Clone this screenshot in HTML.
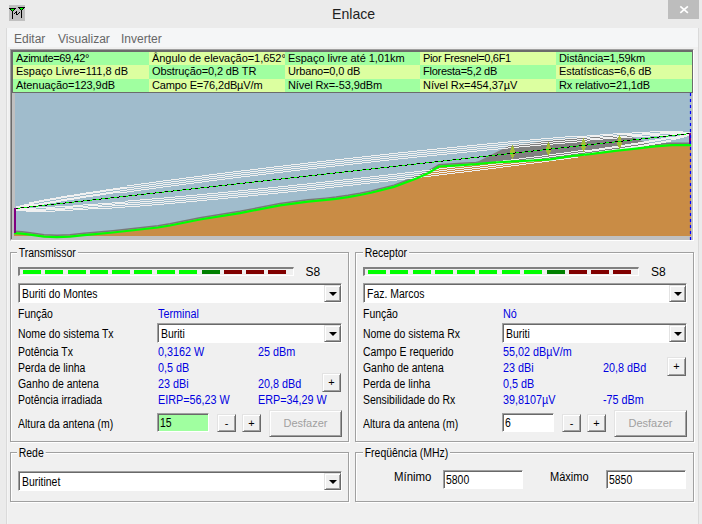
<!DOCTYPE html>
<html><head><meta charset="utf-8">
<style>
*{margin:0;padding:0;box-sizing:border-box}
html,body{width:702px;height:524px;overflow:hidden;background:#ebebeb;font-family:"Liberation Sans",sans-serif;font-size:11px;color:#000}
.a{position:absolute;white-space:nowrap;line-height:13px}
#client{position:absolute;left:7px;top:47px;width:691px;height:477px;background:#f0f0f0}
#menu{position:absolute;left:7px;top:28px;width:691px;height:19px;background:#f5f6f7}
.mi{position:absolute;top:32px;font-size:12px;color:#666;line-height:14px}
#title{position:absolute;left:331.5px;top:5px;font-size:15px;color:#1e1e1e;line-height:18px;transform:scaleX(0.94);transform-origin:0 0}
#close{position:absolute;left:668px;top:0;width:31px;height:19px;background:#bdbdbd}
#frame{position:absolute;left:10px;top:49px;width:684px;height:192px;border-top:1px solid #a0a0a0;border-left:1px solid #a0a0a0;border-right:1px solid #fff;border-bottom:1px solid #fff;background:#c0c0c0}
#frame2{position:absolute;left:11px;top:50px;width:682px;height:189px;border-top:1px solid #6b6b6b;border-left:1px solid #6b6b6b}
.cell{position:absolute;height:13px;font-size:11px;line-height:13px;padding-left:3px;white-space:nowrap;overflow:hidden}
.g{background:#a0ffa0}.y{background:#dcffa0}
.grp{position:absolute;border:1px solid #a0a0a0;box-shadow:1px 1px 0 #fff inset, 1px 1px 0 #fff}
.lbl{position:absolute;background:#f0f0f0;padding:0 2px;line-height:13px;margin-top:1px;font-size:12px;transform:scaleX(0.87);transform-origin:0 0;white-space:nowrap}
.t{position:absolute;line-height:13px;font-size:12px;letter-spacing:0;white-space:nowrap;margin-left:-1.5px;margin-top:1px;transform:scaleX(0.87);transform-origin:0 0}
.t.b{transform:scaleX(0.9);margin-left:-0.5px}
.b{color:#0000e0}
.combo{position:absolute;height:20px;background:#fff;border-top:1px solid #a0a0a0;border-left:1px solid #a0a0a0;border-right:1px solid #fff;border-bottom:1px solid #fff;box-shadow:inset 1px 1px 0 #696969}
.combo .tx{position:absolute;left:3px;top:3px;line-height:14px;font-size:12px;transform:scaleX(0.87);transform-origin:0 0;white-space:nowrap}
.dd{position:absolute;right:0;top:1px;width:17px;height:17px;background:#f0f0f0;border-top:1px solid #e3e3e3;border-left:1px solid #e3e3e3;border-right:1px solid #696969;border-bottom:1px solid #696969;box-shadow:inset 1px 1px 0 #fff,inset -1px -1px 0 #a0a0a0}
.dd:after{content:"";position:absolute;left:3.5px;top:5.5px;border-left:4px solid transparent;border-right:4px solid transparent;border-top:4.5px solid #000}
.btn{position:absolute;background:#f0f0f0;border-top:1px solid #e3e3e3;border-left:1px solid #e3e3e3;border-right:1px solid #696969;border-bottom:1px solid #696969;box-shadow:inset 1px 1px 0 #fff,inset -1px -1px 0 #a0a0a0;text-align:center;line-height:16px}
.edit{position:absolute;height:19px;border-top:1px solid #a0a0a0;border-left:1px solid #a0a0a0;border-right:1px solid #fff;border-bottom:1px solid #fff;box-shadow:inset 1px 1px 0 #696969}
.et{position:absolute;left:2px;top:2px;font-size:12px;line-height:14px;transform:scaleX(0.87);transform-origin:0 0}
.bar{position:absolute;width:276px;height:9px;border-top:2px solid #808080;border-left:2px solid #808080;border-right:1px solid #fff;border-bottom:1px solid #fff;background:#f0f0f0}
.seg{position:absolute;top:1px;width:18px;height:4px}
</style></head><body>
<div id="title">Enlace</div>
<div id="close"><svg width="31" height="19" style="position:absolute;left:0;top:0"><path d="M12.3 6.3 L19.9 12.9 M19.9 6.3 L12.3 12.9" stroke="#fff" stroke-width="1.7"/></svg></div>
<svg style="position:absolute;left:9px;top:5px" width="16" height="16" shape-rendering="crispEdges"><rect x="0" y="0" width="16" height="16" fill="#c0c0c0"/><rect x="0" y="3" width="7" height="1" fill="#000"/><rect x="1" y="4" width="1" height="1" fill="#000"/><rect x="2" y="4" width="3" height="1" fill="#00ff00"/><rect x="5" y="4" width="1" height="1" fill="#000"/><rect x="2" y="5" width="1" height="1" fill="#000"/><rect x="3" y="5" width="1" height="1" fill="#00ff00"/><rect x="4" y="5" width="1" height="1" fill="#000"/><rect x="3" y="6" width="1" height="8" fill="#000"/><rect x="9" y="2" width="7" height="1" fill="#000"/><rect x="10" y="3" width="1" height="1" fill="#000"/><rect x="11" y="3" width="3" height="1" fill="#00ff00"/><rect x="14" y="3" width="1" height="1" fill="#000"/><rect x="11" y="4" width="1" height="1" fill="#000"/><rect x="12" y="4" width="1" height="1" fill="#00ff00"/><rect x="13" y="4" width="1" height="1" fill="#000"/><rect x="12" y="5" width="1" height="8" fill="#000"/><rect x="5" y="8" width="1" height="1" fill="#000"/><rect x="6" y="7" width="1" height="1" fill="#000"/><rect x="7" y="6" width="1" height="1" fill="#000"/><rect x="7" y="7" width="1" height="1" fill="#000"/><rect x="7" y="8" width="1" height="1" fill="#000"/><rect x="7" y="9" width="1" height="1" fill="#000"/><rect x="8" y="9" width="1" height="1" fill="#000"/><rect x="9" y="8" width="1" height="1" fill="#000"/><rect x="10" y="7" width="1" height="1" fill="#000"/></svg>
<div id="menu"></div>
<div class="mi" style="left:14px">Editar</div>
<div class="mi" style="left:58px">Visualizar</div>
<div class="mi" style="left:121px">Inverter</div>
<div id="client"></div>
<div style="position:absolute;left:6px;top:28px;width:1px;height:496px;background:#dadada"></div><div style="position:absolute;left:7px;top:47px;width:1px;height:477px;background:#f5f5f5"></div><div style="position:absolute;left:698px;top:28px;width:1px;height:496px;background:#dadada"></div>
<div id="frame"></div><div id="frame2"></div><div style="position:absolute;left:12px;top:51px;width:681px;height:42px;border-top:1px solid #6b6b6b;border-left:1px solid #6b6b6b"></div>

<!-- table -->
<div class="cell g" style="left:13px;top:52px;width:136px;letter-spacing:-0.355px">Azimute=69,42°</div>
<div class="cell y" style="left:149px;top:52px;width:136px;letter-spacing:-0.05px">Ângulo de elevação=1,652°</div>
<div class="cell g" style="left:285px;top:52px;width:135px;letter-spacing:-0.034px">Espaço livre até 1,01km</div>
<div class="cell y" style="left:420px;top:52px;width:136px;letter-spacing:-0.335px">Pior Fresnel=0,6F1</div>
<div class="cell g" style="left:556px;top:52px;width:136px;letter-spacing:-0.110px">Distância=1,59km</div>
<div class="cell y" style="left:13px;top:65px;width:136px;height:14px;letter-spacing:-0.020px">Espaço Livre=111,8 dB</div>
<div class="cell g" style="left:149px;top:65px;width:136px;height:14px;letter-spacing:-0.120px">Obstrução=0,2 dB TR</div>
<div class="cell y" style="left:285px;top:65px;width:135px;height:14px;letter-spacing:-0.170px">Urbano=0,0 dB</div>
<div class="cell g" style="left:420px;top:65px;width:136px;height:14px;letter-spacing:-0.263px">Floresta=5,2 dB</div>
<div class="cell y" style="left:556px;top:65px;width:136px;height:14px;letter-spacing:-0.103px">Estatísticas=6,6 dB</div>
<div class="cell g" style="left:13px;top:79px;width:136px;letter-spacing:-0.058px">Atenuação=123,9dB</div>
<div class="cell y" style="left:149px;top:79px;width:136px;letter-spacing:-0.146px">Campo E=76,2dBµV/m</div>
<div class="cell g" style="left:285px;top:79px;width:135px;letter-spacing:-0.101px">Nível Rx=-53,9dBm</div>
<div class="cell y" style="left:420px;top:79px;width:136px;letter-spacing:-0.058px">Nível Rx=454,37µV</div>
<div class="cell g" style="left:556px;top:79px;width:136px;letter-spacing:-0.123px">Rx relativo=21,1dB</div>
<div style="position:absolute;left:12px;top:92px;width:681px;height:1px;background:#6b6b6b"></div><div style="position:absolute;left:692px;top:51px;width:1px;height:42px;background:#6b6b6b"></div>

<!-- profile -->
<svg id="prof" style="position:absolute;left:0;top:0" width="702" height="524">
<rect x="15" y="93" width="676" height="143" fill="#a0bccc"/>
<polygon fill="#c98c45" points="14.0,232.0 22.0,232.5 30.0,233.5 37.0,234.5 44.0,235.5 57.0,236.0 70.0,235.5 84.0,234.0 90.0,233.5 113.0,231.4 140.0,228.4 158.0,226.4 170.0,224.4 200.0,218.4 240.0,212.0 280.0,204.2 308.0,200.5 326.0,198.8 336.0,197.7 348.0,196.0 360.0,193.9 371.0,191.7 394.0,185.8 417.0,177.2 428.0,172.1 439.0,165.4 458.0,164.2 476.0,163.1 493.0,161.4 510.0,160.6 533.0,159.4 550.0,158.2 561.0,156.5 573.0,154.8 590.0,153.1 615.0,149.8 636.0,147.5 655.0,145.2 672.0,144.0 691.0,144.0 691.0,236.0 14.0,236.0"/>
<polyline fill="none" stroke="#787878" stroke-width="1.4" points="14.0,231.3 22.0,231.8 30.0,232.8 37.0,233.8 44.0,234.8 57.0,235.3 70.0,234.8 84.0,233.3 90.0,232.8 113.0,230.7 140.0,227.7 158.0,225.7 170.0,223.7 200.0,217.7 240.0,211.3 280.0,203.5 308.0,199.8 326.0,198.1 336.0,197.0 348.0,195.3 360.0,193.2 371.0,191.0 394.0,185.1 417.0,176.5 428.0,171.4 439.0,164.7 458.0,163.5 476.0,162.4 493.0,160.7 510.0,159.9 533.0,158.7 550.0,157.5 561.0,155.8 573.0,154.1 590.0,152.4 615.0,149.1 636.0,146.8 655.0,144.5 672.0,143.3 691.0,143.3"/>
<polygon fill="#808080" points="476.0,163.0 478.0,161.5 510.0,145.3 530.0,143.2 550.0,140.5 600.0,136.5 628.0,135.5 644.0,142.0 654.0,145.5 654.0,145.3 636.0,147.5 615.0,149.8 590.0,153.1 573.0,154.8 561.0,156.5 550.0,158.2 533.0,159.4 510.0,160.6 493.0,161.4 476.0,163.1"/>
<path fill="#f0f0f0" d="M16 208h4v1h-4zM20 207h4v1h-4zM24 206h5v1h-5zM29 205h5v1h-5zM34 205h5v1h-5zM39 204h5v1h-5zM44 203h6v1h-6zM50 202h6v1h-6zM56 201h5v1h-5zM61 200h6v1h-6zM67 199h7v1h-7zM74 198h6v1h-6zM80 197h6v1h-6zM86 196h7v1h-7zM93 195h7v1h-7zM100 194h6v1h-6zM106 193h7v1h-7zM113 192h7v1h-7zM120 192h7v1h-7zM127 191h7v1h-7zM134 190h7v1h-7zM141 189h8v1h-8zM149 188h7v1h-7zM156 187h7v1h-7zM163 186h8v1h-8zM171 185h8v1h-8zM179 184h7v1h-7zM186 183h8v1h-8zM194 182h8v1h-8zM202 181h7v1h-7zM209 180h8v1h-8zM217 179h8v1h-8zM225 178h8v1h-8zM233 177h8v1h-8zM241 176h9v1h-9zM250 175h8v1h-8zM258 174h8v1h-8zM266 173h8v1h-8zM274 172h9v1h-9zM283 171h8v1h-8zM291 170h9v1h-9zM300 169h8v1h-8zM308 168h9v1h-9zM317 167h9v1h-9zM326 166h9v1h-9zM335 165h9v1h-9zM344 164h9v1h-9zM353 163h9v1h-9zM362 162h9v1h-9zM371 161h9v1h-9zM380 160h9v1h-9zM389 159h9v1h-9zM398 158h10v1h-10zM408 157h9v1h-9zM417 156h10v1h-10zM427 155h10v1h-10zM437 154h10v1h-10zM447 153h10v1h-10zM457 152h10v1h-10zM467 151h10v1h-10zM477 150h10v1h-10zM487 149h11v1h-11zM498 148h10v1h-10zM508 147h11v1h-11zM519 146h11v1h-11zM530 145h11v1h-11zM541 144h12v1h-12zM553 143h12v1h-12zM565 142h12v1h-12zM577 141h10v1h-10zM587 140h3v1h-3zM590 139h10v1h-10zM600 139h3v1h-3zM603 138h10v1h-10zM613 138h4v1h-4zM617 137h10v1h-10zM627 137h5v1h-5zM632 136h10v1h-10zM642 136h8v1h-8zM650 135h10v1h-10zM660 135h10v1h-10zM670 134h9v1h-9zM679 134h4v1h-4zM683 133h7v1h-7zM16 207h4v1h-4zM20 206h4v1h-4zM24 205h5v1h-5zM29 204h5v1h-5zM34 204h5v1h-5zM39 203h5v1h-5zM44 202h6v1h-6zM50 201h6v1h-6zM56 200h5v1h-5zM61 199h6v1h-6zM67 198h7v1h-7zM74 197h6v1h-6zM80 196h6v1h-6zM86 195h7v1h-7zM93 194h7v1h-7zM100 193h6v1h-6zM106 192h7v1h-7zM113 191h7v1h-7zM120 190h7v1h-7zM127 189h7v1h-7zM134 188h7v1h-7zM141 187h8v1h-8zM149 186h7v1h-7zM156 185h7v1h-7zM163 184h8v1h-8zM171 183h8v1h-8zM179 182h7v1h-7zM186 181h8v1h-8zM194 180h8v1h-8zM202 179h7v1h-7zM209 178h8v1h-8zM217 177h8v1h-8zM225 176h8v1h-8zM233 175h8v1h-8zM241 174h9v1h-9zM250 173h8v1h-8zM258 172h8v1h-8zM266 171h8v1h-8zM274 170h9v1h-9zM283 169h8v1h-8zM291 168h9v1h-9zM300 167h8v1h-8zM308 166h9v1h-9zM317 165h9v1h-9zM326 164h9v1h-9zM335 163h9v1h-9zM344 162h9v1h-9zM353 161h9v1h-9zM362 160h9v1h-9zM371 159h9v1h-9zM380 158h9v1h-9zM389 157h9v1h-9zM398 156h10v1h-10zM408 155h9v1h-9zM417 154h10v1h-10zM427 153h10v1h-10zM437 152h10v1h-10zM447 151h10v1h-10zM457 150h10v1h-10zM467 149h10v1h-10zM477 148h10v1h-10zM487 147h11v1h-11zM498 146h10v1h-10zM508 145h11v1h-11zM519 144h11v1h-11zM530 143h11v1h-11zM541 142h12v1h-12zM553 141h12v1h-12zM565 140h12v1h-12zM577 139h10v1h-10zM587 138h3v1h-3zM590 138h10v1h-10zM600 137h3v1h-3zM603 137h10v1h-10zM613 136h4v1h-4zM617 136h10v1h-10zM627 135h5v1h-5zM632 135h10v1h-10zM642 134h8v1h-8zM650 134h10v1h-10zM660 133h10v1h-10zM670 133h9v1h-9zM679 133h4v1h-4zM683 133h7v1h-7zM16 207h4v1h-4zM20 206h4v1h-4zM24 205h5v1h-5zM29 203h5v1h-5zM34 202h5v1h-5zM39 201h5v1h-5zM44 200h6v1h-6zM50 199h6v1h-6zM56 198h5v1h-5zM61 197h6v1h-6zM67 196h7v1h-7zM74 195h6v1h-6zM80 194h6v1h-6zM86 193h7v1h-7zM93 192h7v1h-7zM100 191h6v1h-6zM106 190h7v1h-7zM113 189h7v1h-7zM120 188h7v1h-7zM127 187h7v1h-7zM134 186h7v1h-7zM141 185h8v1h-8zM149 184h7v1h-7zM156 183h7v1h-7zM163 182h8v1h-8zM171 181h8v1h-8zM179 180h7v1h-7zM186 179h8v1h-8zM194 178h8v1h-8zM202 177h7v1h-7zM209 176h8v1h-8zM217 175h8v1h-8zM225 174h8v1h-8zM233 173h8v1h-8zM241 172h9v1h-9zM250 171h8v1h-8zM258 170h8v1h-8zM266 169h8v1h-8zM274 168h9v1h-9zM283 167h8v1h-8zM291 166h9v1h-9zM300 165h8v1h-8zM308 164h9v1h-9zM317 163h9v1h-9zM326 162h9v1h-9zM335 161h9v1h-9zM344 160h9v1h-9zM353 159h9v1h-9zM362 158h9v1h-9zM371 157h9v1h-9zM380 156h9v1h-9zM389 155h9v1h-9zM398 154h10v1h-10zM408 153h9v1h-9zM417 152h10v1h-10zM427 151h10v1h-10zM437 150h10v1h-10zM447 149h10v1h-10zM457 148h10v1h-10zM467 147h10v1h-10zM477 146h10v1h-10zM487 145h11v1h-11zM498 144h10v1h-10zM508 143h11v1h-11zM519 142h11v1h-11zM530 141h11v1h-11zM541 140h12v1h-12zM553 139h12v1h-12zM565 138h12v1h-12zM577 137h10v1h-10zM587 137h3v1h-3zM590 136h10v1h-10zM600 136h3v1h-3zM603 135h10v1h-10zM613 135h4v1h-4zM617 134h10v1h-10zM627 134h5v1h-5zM632 134h10v1h-10zM642 133h8v1h-8zM650 133h10v1h-10zM660 132h10v1h-10zM670 132h9v1h-9zM679 132h4v1h-4zM683 132h7v1h-7zM16 206h4v1h-4zM20 205h4v1h-4zM24 204h5v1h-5zM29 202h5v1h-5zM34 201h5v1h-5zM39 200h5v1h-5zM44 199h6v1h-6zM50 198h6v1h-6zM56 197h5v1h-5zM61 196h6v1h-6zM67 195h7v1h-7zM74 194h6v1h-6zM80 193h6v1h-6zM86 192h7v1h-7zM93 191h7v1h-7zM100 190h6v1h-6zM106 189h7v1h-7zM113 188h7v1h-7zM120 187h7v1h-7zM127 185h7v1h-7zM134 184h7v1h-7zM141 183h8v1h-8zM149 182h7v1h-7zM156 181h7v1h-7zM163 180h8v1h-8zM171 179h8v1h-8zM179 178h7v1h-7zM186 177h8v1h-8zM194 176h8v1h-8zM202 175h7v1h-7zM209 174h8v1h-8zM217 173h8v1h-8zM225 172h8v1h-8zM233 171h8v1h-8zM241 170h9v1h-9zM250 169h8v1h-8zM258 168h8v1h-8zM266 167h8v1h-8zM274 166h9v1h-9zM283 165h8v1h-8zM291 164h9v1h-9zM300 163h8v1h-8zM308 162h9v1h-9zM317 161h9v1h-9zM326 160h9v1h-9zM335 159h9v1h-9zM344 158h9v1h-9zM353 157h9v1h-9zM362 156h9v1h-9zM371 155h9v1h-9zM380 154h9v1h-9zM389 153h9v1h-9zM398 152h10v1h-10zM408 151h9v1h-9zM417 150h10v1h-10zM427 149h10v1h-10zM437 148h10v1h-10zM447 147h10v1h-10zM457 146h10v1h-10zM467 145h10v1h-10zM477 144h10v1h-10zM487 143h11v1h-11zM498 142h10v1h-10zM508 141h11v1h-11zM519 140h11v1h-11zM530 139h11v1h-11zM541 138h12v1h-12zM553 137h12v1h-12zM565 136h12v1h-12zM577 136h10v1h-10zM587 135h3v1h-3zM590 135h10v1h-10zM600 134h3v1h-3zM603 134h10v1h-10zM613 133h4v1h-4zM617 133h10v1h-10zM627 133h5v1h-5zM632 132h10v1h-10zM642 132h8v1h-8zM650 131h10v1h-10zM660 131h10v1h-10zM670 131h9v1h-9zM679 131h4v1h-4zM683 132h7v1h-7zM16 208h10v1h-10zM26 208h10v1h-10zM36 207h10v1h-10zM46 207h9v1h-9zM55 206h10v1h-10zM65 206h8v1h-8zM73 205h10v1h-10zM83 204h5v1h-5zM88 204h10v1h-10zM98 203h4v1h-4zM102 203h10v1h-10zM112 202h3v1h-3zM115 202h10v1h-10zM125 201h3v1h-3zM128 200h12v1h-12zM140 199h12v1h-12zM152 198h12v1h-12zM164 197h11v1h-11zM175 196h11v1h-11zM186 195h11v1h-11zM197 194h10v1h-10zM207 193h11v1h-11zM218 192h10v1h-10zM228 191h10v1h-10zM238 190h10v1h-10zM248 189h10v1h-10zM258 188h10v1h-10zM268 187h10v1h-10zM278 186h10v1h-10zM288 185h9v1h-9zM297 184h10v1h-10zM307 183h9v1h-9zM316 182h9v1h-9zM325 181h9v1h-9zM334 180h9v1h-9zM343 179h10v1h-10zM353 178h8v1h-8zM361 177h9v1h-9zM370 176h9v1h-9zM379 175h9v1h-9zM388 174h9v1h-9zM397 173h8v1h-8zM405 172h9v1h-9zM414 171h8v1h-8zM422 170h9v1h-9zM431 169h8v1h-8zM439 168h8v1h-8zM447 167h8v1h-8zM455 166h9v1h-9zM464 165h8v1h-8zM472 164h8v1h-8zM480 163h8v1h-8zM488 162h8v1h-8zM496 161h7v1h-7zM503 160h8v1h-8zM511 159h8v1h-8zM519 158h7v1h-7zM526 157h8v1h-8zM534 156h8v1h-8zM542 155h7v1h-7zM549 154h7v1h-7zM556 153h8v1h-8zM564 152h7v1h-7zM571 151h7v1h-7zM578 150h7v1h-7zM585 150h7v1h-7zM592 149h7v1h-7zM599 148h6v1h-6zM605 147h7v1h-7zM612 146h7v1h-7zM619 145h6v1h-6zM625 144h6v1h-6zM631 143h7v1h-7zM638 142h6v1h-6zM644 141h5v1h-5zM649 140h6v1h-6zM655 139h6v1h-6zM661 138h5v1h-5zM666 137h5v1h-5zM671 137h5v1h-5zM676 136h4v1h-4zM680 135h4v1h-4zM684 134h3v1h-3zM687 134h2v1h-2zM689 133h1v1h-1zM16 209h10v1h-10zM26 209h10v1h-10zM36 209h10v1h-10zM46 208h9v1h-9zM55 208h10v1h-10zM65 207h8v1h-8zM73 206h10v1h-10zM83 206h5v1h-5zM88 205h10v1h-10zM98 205h4v1h-4zM102 204h10v1h-10zM112 204h3v1h-3zM115 203h10v1h-10zM125 203h3v1h-3zM128 202h12v1h-12zM140 201h12v1h-12zM152 200h12v1h-12zM164 199h11v1h-11zM175 198h11v1h-11zM186 197h11v1h-11zM197 196h10v1h-10zM207 195h11v1h-11zM218 194h10v1h-10zM228 193h10v1h-10zM238 192h10v1h-10zM248 191h10v1h-10zM258 190h10v1h-10zM268 189h10v1h-10zM278 188h10v1h-10zM288 187h9v1h-9zM297 186h10v1h-10zM307 185h9v1h-9zM316 184h9v1h-9zM325 183h9v1h-9zM334 182h9v1h-9zM343 181h10v1h-10zM353 180h8v1h-8zM361 179h9v1h-9zM370 178h9v1h-9zM379 177h9v1h-9zM388 176h9v1h-9zM397 175h8v1h-8zM405 174h9v1h-9zM414 173h8v1h-8zM422 172h9v1h-9zM431 171h8v1h-8zM439 170h8v1h-8zM447 169h8v1h-8zM455 168h9v1h-9zM464 167h8v1h-8zM472 166h8v1h-8zM480 165h8v1h-8zM488 164h8v1h-8zM496 163h7v1h-7zM503 162h8v1h-8zM511 161h8v1h-8zM519 160h7v1h-7zM526 159h8v1h-8zM534 158h8v1h-8zM542 157h7v1h-7zM549 156h7v1h-7zM556 155h8v1h-8zM564 154h7v1h-7zM571 153h7v1h-7zM578 152h7v1h-7zM585 151h7v1h-7zM592 150h7v1h-7zM599 149h6v1h-6zM605 148h7v1h-7zM612 147h7v1h-7zM619 146h6v1h-6zM625 145h6v1h-6zM631 144h7v1h-7zM638 143h6v1h-6zM644 142h5v1h-5zM649 141h6v1h-6zM655 140h6v1h-6zM661 139h5v1h-5zM666 138h5v1h-5zM671 137h5v1h-5zM676 136h4v1h-4zM680 136h4v1h-4zM684 135h3v1h-3zM687 134h2v1h-2zM689 133h1v1h-1zM16 209h10v1h-10zM26 210h10v1h-10zM36 210h10v1h-10zM46 209h9v1h-9zM55 209h10v1h-10zM65 208h8v1h-8zM73 208h10v1h-10zM83 207h5v1h-5zM88 207h10v1h-10zM98 206h4v1h-4zM102 206h10v1h-10zM112 205h3v1h-3zM115 205h10v1h-10zM125 204h3v1h-3zM128 204h12v1h-12zM140 203h12v1h-12zM152 202h12v1h-12zM164 201h11v1h-11zM175 200h11v1h-11zM186 199h11v1h-11zM197 198h10v1h-10zM207 197h11v1h-11zM218 196h10v1h-10zM228 195h10v1h-10zM238 194h10v1h-10zM248 193h10v1h-10zM258 192h10v1h-10zM268 191h10v1h-10zM278 190h10v1h-10zM288 189h9v1h-9zM297 188h10v1h-10zM307 187h9v1h-9zM316 186h9v1h-9zM325 185h9v1h-9zM334 184h9v1h-9zM343 183h10v1h-10zM353 182h8v1h-8zM361 181h9v1h-9zM370 180h9v1h-9zM379 179h9v1h-9zM388 178h9v1h-9zM397 177h8v1h-8zM405 176h9v1h-9zM414 175h8v1h-8zM422 174h9v1h-9zM431 173h8v1h-8zM439 172h8v1h-8zM447 171h8v1h-8zM455 170h9v1h-9zM464 169h8v1h-8zM472 168h8v1h-8zM480 167h8v1h-8zM488 166h8v1h-8zM496 165h7v1h-7zM503 164h8v1h-8zM511 163h8v1h-8zM519 162h7v1h-7zM526 161h8v1h-8zM534 160h8v1h-8zM542 159h7v1h-7zM549 158h7v1h-7zM556 157h8v1h-8zM564 156h7v1h-7zM571 155h7v1h-7zM578 154h7v1h-7zM585 153h7v1h-7zM592 152h7v1h-7zM599 151h6v1h-6zM605 150h7v1h-7zM612 149h7v1h-7zM619 148h6v1h-6zM625 147h6v1h-6zM631 146h7v1h-7zM638 145h6v1h-6zM644 144h5v1h-5zM649 143h6v1h-6zM655 142h6v1h-6zM661 141h5v1h-5zM666 140h5v1h-5zM671 138h5v1h-5zM676 137h4v1h-4zM680 136h4v1h-4zM684 135h3v1h-3zM687 134h2v1h-2zM689 134h1v1h-1zM16 210h10v1h-10zM26 211h10v1h-10zM36 211h10v1h-10zM46 211h9v1h-9zM55 210h10v1h-10zM65 210h8v1h-8zM73 209h10v1h-10zM83 209h5v1h-5zM88 208h10v1h-10zM98 208h4v1h-4zM102 208h10v1h-10zM112 207h3v1h-3zM115 207h10v1h-10zM125 206h3v1h-3zM128 206h12v1h-12zM140 205h12v1h-12zM152 204h12v1h-12zM164 203h11v1h-11zM175 202h11v1h-11zM186 201h11v1h-11zM197 200h10v1h-10zM207 199h11v1h-11zM218 198h10v1h-10zM228 197h10v1h-10zM238 196h10v1h-10zM248 195h10v1h-10zM258 194h10v1h-10zM268 193h10v1h-10zM278 192h10v1h-10zM288 191h9v1h-9zM297 190h10v1h-10zM307 189h9v1h-9zM316 188h9v1h-9zM325 187h9v1h-9zM334 186h9v1h-9zM343 185h10v1h-10zM353 184h8v1h-8zM361 183h9v1h-9zM370 182h9v1h-9zM379 181h9v1h-9zM388 180h9v1h-9zM397 179h8v1h-8zM405 178h9v1h-9zM414 177h8v1h-8zM422 176h9v1h-9zM431 175h8v1h-8zM439 174h8v1h-8zM447 173h8v1h-8zM455 172h9v1h-9zM464 171h8v1h-8zM472 170h8v1h-8zM480 169h8v1h-8zM488 168h8v1h-8zM496 167h7v1h-7zM503 166h8v1h-8zM511 165h8v1h-8zM519 164h7v1h-7zM526 163h8v1h-8zM534 162h8v1h-8zM542 161h7v1h-7zM549 160h7v1h-7zM556 159h8v1h-8zM564 158h7v1h-7zM571 157h7v1h-7zM578 155h7v1h-7zM585 154h7v1h-7zM592 153h7v1h-7zM599 152h6v1h-6zM605 151h7v1h-7zM612 150h7v1h-7zM619 149h6v1h-6zM625 148h6v1h-6zM631 147h7v1h-7zM638 146h6v1h-6zM644 145h5v1h-5zM649 144h6v1h-6zM655 143h6v1h-6zM661 142h5v1h-5zM666 141h5v1h-5zM671 139h5v1h-5zM676 138h4v1h-4zM680 137h4v1h-4zM684 136h3v1h-3zM687 135h2v1h-2zM689 134h1v1h-1z"/>
<polyline fill="none" stroke="#00ff00" stroke-width="2.2" points="14.0,233.1 22.0,233.6 30.0,234.6 37.0,235.6 44.0,236.6 57.0,237.1 70.0,236.6 84.0,235.1 90.0,234.6 113.0,232.5 140.0,229.5 158.0,227.5 170.0,225.5 200.0,219.5 240.0,213.1 280.0,205.3 308.0,201.6 326.0,199.9 336.0,198.8 348.0,197.1 360.0,195.0 371.0,192.8 394.0,186.9 417.0,178.3 428.0,173.2 439.0,166.5 458.0,165.3 476.0,164.2 493.0,162.5 510.0,161.7 533.0,160.5 550.0,159.3 561.0,157.6 573.0,155.9 590.0,154.2 615.0,150.9 636.0,148.6 655.0,146.3 672.0,145.1 691.0,145.1"/>
<path fill="#a4bc34" d="M512 145h1v1h-1zM512 146h1v1h-1zM511 147h3v1h-3zM511 148h3v1h-3zM511 149h3v1h-3zM510 150h5v1h-5zM510 151h5v1h-5zM510 152h5v1h-5zM510 153h5v1h-5zM510 154h5v1h-5zM511 155h3v1h-3zM511 156h3v1h-3zM512 157h1v1h-1zM512 158h1v1h-1zM548 142h1v1h-1zM548 143h1v1h-1zM547 144h3v1h-3zM547 145h3v1h-3zM547 146h3v1h-3zM546 147h5v1h-5zM546 148h5v1h-5zM546 149h5v1h-5zM546 150h5v1h-5zM546 151h5v1h-5zM547 152h3v1h-3zM547 153h3v1h-3zM548 154h1v1h-1zM548 155h1v1h-1zM583 138h1v1h-1zM583 139h1v1h-1zM582 140h3v1h-3zM582 141h3v1h-3zM582 142h3v1h-3zM581 143h5v1h-5zM581 144h5v1h-5zM581 145h5v1h-5zM581 146h5v1h-5zM581 147h5v1h-5zM582 148h3v1h-3zM582 149h3v1h-3zM583 150h1v1h-1zM583 151h1v1h-1zM619 135h1v1h-1zM619 136h1v1h-1zM618 137h3v1h-3zM618 138h3v1h-3zM618 139h3v1h-3zM617 140h5v1h-5zM617 141h5v1h-5zM617 142h5v1h-5zM617 143h5v1h-5zM617 144h5v1h-5zM618 145h3v1h-3zM618 146h3v1h-3zM619 147h1v1h-1zM619 148h1v1h-1z"/>
<path fill="#00ff00" d="M18 208h1v1h-1zM19 208h1v1h-1zM20 207h1v1h-1zM24 207h1v1h-1zM25 207h1v1h-1zM26 207h1v1h-1zM30 206h1v1h-1zM31 206h1v1h-1zM32 206h1v1h-1zM36 206h1v1h-1zM37 206h1v1h-1zM38 205h1v1h-1zM42 205h1v1h-1zM43 205h1v1h-1zM44 205h1v1h-1zM48 204h1v1h-1zM49 204h1v1h-1zM50 204h1v1h-1zM54 204h1v1h-1zM55 204h1v1h-1zM56 203h1v1h-1zM60 203h1v1h-1zM61 203h1v1h-1zM62 203h1v1h-1zM66 202h1v1h-1zM67 202h1v1h-1zM68 202h1v1h-1zM72 202h1v1h-1zM73 202h1v1h-1zM74 201h1v1h-1zM78 201h1v1h-1zM79 201h1v1h-1zM80 201h1v1h-1zM84 200h1v1h-1zM85 200h1v1h-1zM86 200h1v1h-1zM90 200h1v1h-1zM91 200h1v1h-1zM92 199h1v1h-1zM96 199h1v1h-1zM97 199h1v1h-1zM98 199h1v1h-1zM102 198h1v1h-1zM103 198h1v1h-1zM104 198h1v1h-1zM108 198h1v1h-1zM109 198h1v1h-1zM110 197h1v1h-1zM114 197h1v1h-1zM115 197h1v1h-1zM116 197h1v1h-1zM120 196h1v1h-1zM121 196h1v1h-1zM122 196h1v1h-1zM126 196h1v1h-1zM127 196h1v1h-1zM128 195h1v1h-1zM132 195h1v1h-1zM133 195h1v1h-1zM134 195h1v1h-1zM138 194h1v1h-1zM139 194h1v1h-1zM140 194h1v1h-1zM144 194h1v1h-1zM145 194h1v1h-1zM146 193h1v1h-1zM150 193h1v1h-1zM151 193h1v1h-1zM152 193h1v1h-1zM156 192h1v1h-1zM157 192h1v1h-1zM158 192h1v1h-1zM162 192h1v1h-1zM163 192h1v1h-1zM164 191h1v1h-1zM168 191h1v1h-1zM169 191h1v1h-1zM170 191h1v1h-1zM174 190h1v1h-1zM175 190h1v1h-1zM176 190h1v1h-1zM180 190h1v1h-1zM181 190h1v1h-1zM182 189h1v1h-1zM186 189h1v1h-1zM187 189h1v1h-1zM188 189h1v1h-1zM192 188h1v1h-1zM193 188h1v1h-1zM194 188h1v1h-1zM198 188h1v1h-1zM199 188h1v1h-1zM200 187h1v1h-1zM204 187h1v1h-1zM205 187h1v1h-1zM206 187h1v1h-1zM210 186h1v1h-1zM211 186h1v1h-1zM212 186h1v1h-1zM216 186h1v1h-1zM217 186h1v1h-1zM218 185h1v1h-1zM222 185h1v1h-1zM223 185h1v1h-1zM224 185h1v1h-1zM228 184h1v1h-1zM229 184h1v1h-1zM230 184h1v1h-1zM234 184h1v1h-1zM235 184h1v1h-1zM236 183h1v1h-1zM240 183h1v1h-1zM241 183h1v1h-1zM242 183h1v1h-1zM246 182h1v1h-1zM247 182h1v1h-1zM248 182h1v1h-1zM252 182h1v1h-1zM253 182h1v1h-1zM254 181h1v1h-1zM258 181h1v1h-1zM259 181h1v1h-1zM260 181h1v1h-1zM264 180h1v1h-1zM265 180h1v1h-1zM266 180h1v1h-1zM270 180h1v1h-1zM271 180h1v1h-1zM272 179h1v1h-1zM276 179h1v1h-1zM277 179h1v1h-1zM278 179h1v1h-1zM282 178h1v1h-1zM283 178h1v1h-1zM284 178h1v1h-1zM288 178h1v1h-1zM289 178h1v1h-1zM290 177h1v1h-1zM294 177h1v1h-1zM295 177h1v1h-1zM296 177h1v1h-1zM300 176h1v1h-1zM301 176h1v1h-1zM302 176h1v1h-1zM306 176h1v1h-1zM307 176h1v1h-1zM308 175h1v1h-1zM312 175h1v1h-1zM313 175h1v1h-1zM314 175h1v1h-1zM318 174h1v1h-1zM319 174h1v1h-1zM320 174h1v1h-1zM324 174h1v1h-1zM325 174h1v1h-1zM326 173h1v1h-1zM330 173h1v1h-1zM331 173h1v1h-1zM332 173h1v1h-1zM336 172h1v1h-1zM337 172h1v1h-1zM338 172h1v1h-1zM342 172h1v1h-1zM343 172h1v1h-1zM344 171h1v1h-1zM348 171h1v1h-1zM349 171h1v1h-1zM350 171h1v1h-1zM354 170h1v1h-1zM355 170h1v1h-1zM356 170h1v1h-1zM360 170h1v1h-1zM361 170h1v1h-1zM362 169h1v1h-1zM366 169h1v1h-1zM367 169h1v1h-1zM368 169h1v1h-1zM372 168h1v1h-1zM373 168h1v1h-1zM374 168h1v1h-1zM378 168h1v1h-1zM379 168h1v1h-1zM380 167h1v1h-1zM384 167h1v1h-1zM385 167h1v1h-1zM386 167h1v1h-1zM390 166h1v1h-1zM391 166h1v1h-1zM392 166h1v1h-1zM396 166h1v1h-1zM397 166h1v1h-1zM398 165h1v1h-1zM402 165h1v1h-1zM403 165h1v1h-1zM404 165h1v1h-1zM408 164h1v1h-1zM409 164h1v1h-1zM410 164h1v1h-1zM414 164h1v1h-1zM415 164h1v1h-1zM416 163h1v1h-1zM420 163h1v1h-1zM421 163h1v1h-1zM422 163h1v1h-1zM426 162h1v1h-1zM427 162h1v1h-1zM428 162h1v1h-1zM432 162h1v1h-1zM433 162h1v1h-1zM434 161h1v1h-1zM438 161h1v1h-1zM439 161h1v1h-1zM440 161h1v1h-1zM444 160h1v1h-1zM445 160h1v1h-1zM446 160h1v1h-1zM450 160h1v1h-1zM451 160h1v1h-1zM452 159h1v1h-1zM456 159h1v1h-1zM457 159h1v1h-1zM458 159h1v1h-1zM462 158h1v1h-1zM463 158h1v1h-1zM464 158h1v1h-1zM468 158h1v1h-1zM469 158h1v1h-1zM470 157h1v1h-1zM474 157h1v1h-1zM475 157h1v1h-1zM476 157h1v1h-1zM480 156h1v1h-1zM481 156h1v1h-1zM482 156h1v1h-1zM486 156h1v1h-1zM487 156h1v1h-1zM488 155h1v1h-1zM492 155h1v1h-1zM493 155h1v1h-1zM494 155h1v1h-1zM498 154h1v1h-1zM499 154h1v1h-1zM500 154h1v1h-1zM504 154h1v1h-1zM505 154h1v1h-1zM506 153h1v1h-1zM510 153h1v1h-1zM511 153h1v1h-1zM512 153h1v1h-1zM516 152h1v1h-1zM517 152h1v1h-1zM518 152h1v1h-1zM522 152h1v1h-1zM523 152h1v1h-1zM524 151h1v1h-1zM528 151h1v1h-1zM529 151h1v1h-1zM530 151h1v1h-1zM534 150h1v1h-1zM535 150h1v1h-1zM536 150h1v1h-1zM540 150h1v1h-1zM541 150h1v1h-1zM542 149h1v1h-1zM546 149h1v1h-1zM547 149h1v1h-1zM548 149h1v1h-1zM552 148h1v1h-1zM553 148h1v1h-1zM554 148h1v1h-1zM558 148h1v1h-1zM559 148h1v1h-1zM560 147h1v1h-1zM564 147h1v1h-1zM565 147h1v1h-1zM566 147h1v1h-1zM570 146h1v1h-1zM571 146h1v1h-1zM572 146h1v1h-1zM576 146h1v1h-1zM577 146h1v1h-1zM578 145h1v1h-1zM582 145h1v1h-1zM583 145h1v1h-1zM584 145h1v1h-1zM588 144h1v1h-1zM589 144h1v1h-1zM590 144h1v1h-1zM594 144h1v1h-1zM595 144h1v1h-1zM596 143h1v1h-1zM600 143h1v1h-1zM601 143h1v1h-1zM602 143h1v1h-1zM606 142h1v1h-1zM607 142h1v1h-1zM608 142h1v1h-1zM612 142h1v1h-1zM613 142h1v1h-1zM614 141h1v1h-1zM618 141h1v1h-1zM619 141h1v1h-1zM620 141h1v1h-1zM624 140h1v1h-1zM625 140h1v1h-1zM626 140h1v1h-1zM630 140h1v1h-1zM631 140h1v1h-1zM632 139h1v1h-1zM636 139h1v1h-1zM637 139h1v1h-1zM638 139h1v1h-1zM642 138h1v1h-1zM643 138h1v1h-1zM644 138h1v1h-1zM648 138h1v1h-1zM649 138h1v1h-1zM650 137h1v1h-1zM654 137h1v1h-1zM655 137h1v1h-1zM656 137h1v1h-1zM660 136h1v1h-1zM661 136h1v1h-1zM662 136h1v1h-1zM666 136h1v1h-1zM667 136h1v1h-1zM668 135h1v1h-1zM672 135h1v1h-1zM673 135h1v1h-1zM674 135h1v1h-1zM678 134h1v1h-1zM679 134h1v1h-1zM680 134h1v1h-1zM684 134h1v1h-1zM685 134h1v1h-1zM686 133h1v1h-1z"/>
<path fill="#000" d="M15 208h1v1h-1zM16 208h1v1h-1zM17 208h1v1h-1zM21 207h1v1h-1zM22 207h1v1h-1zM23 207h1v1h-1zM27 207h1v1h-1zM28 207h1v1h-1zM29 206h1v1h-1zM33 206h1v1h-1zM34 206h1v1h-1zM35 206h1v1h-1zM39 205h1v1h-1zM40 205h1v1h-1zM41 205h1v1h-1zM45 205h1v1h-1zM46 205h1v1h-1zM47 204h1v1h-1zM51 204h1v1h-1zM52 204h1v1h-1zM53 204h1v1h-1zM57 203h1v1h-1zM58 203h1v1h-1zM59 203h1v1h-1zM63 203h1v1h-1zM64 203h1v1h-1zM65 202h1v1h-1zM69 202h1v1h-1zM70 202h1v1h-1zM71 202h1v1h-1zM75 201h1v1h-1zM76 201h1v1h-1zM77 201h1v1h-1zM81 201h1v1h-1zM82 201h1v1h-1zM83 200h1v1h-1zM87 200h1v1h-1zM88 200h1v1h-1zM89 200h1v1h-1zM93 199h1v1h-1zM94 199h1v1h-1zM95 199h1v1h-1zM99 199h1v1h-1zM100 199h1v1h-1zM101 198h1v1h-1zM105 198h1v1h-1zM106 198h1v1h-1zM107 198h1v1h-1zM111 197h1v1h-1zM112 197h1v1h-1zM113 197h1v1h-1zM117 197h1v1h-1zM118 197h1v1h-1zM119 196h1v1h-1zM123 196h1v1h-1zM124 196h1v1h-1zM125 196h1v1h-1zM129 195h1v1h-1zM130 195h1v1h-1zM131 195h1v1h-1zM135 195h1v1h-1zM136 195h1v1h-1zM137 194h1v1h-1zM141 194h1v1h-1zM142 194h1v1h-1zM143 194h1v1h-1zM147 193h1v1h-1zM148 193h1v1h-1zM149 193h1v1h-1zM153 193h1v1h-1zM154 193h1v1h-1zM155 192h1v1h-1zM159 192h1v1h-1zM160 192h1v1h-1zM161 192h1v1h-1zM165 191h1v1h-1zM166 191h1v1h-1zM167 191h1v1h-1zM171 191h1v1h-1zM172 191h1v1h-1zM173 190h1v1h-1zM177 190h1v1h-1zM178 190h1v1h-1zM179 190h1v1h-1zM183 189h1v1h-1zM184 189h1v1h-1zM185 189h1v1h-1zM189 189h1v1h-1zM190 189h1v1h-1zM191 188h1v1h-1zM195 188h1v1h-1zM196 188h1v1h-1zM197 188h1v1h-1zM201 187h1v1h-1zM202 187h1v1h-1zM203 187h1v1h-1zM207 187h1v1h-1zM208 187h1v1h-1zM209 186h1v1h-1zM213 186h1v1h-1zM214 186h1v1h-1zM215 186h1v1h-1zM219 185h1v1h-1zM220 185h1v1h-1zM221 185h1v1h-1zM225 185h1v1h-1zM226 185h1v1h-1zM227 184h1v1h-1zM231 184h1v1h-1zM232 184h1v1h-1zM233 184h1v1h-1zM237 183h1v1h-1zM238 183h1v1h-1zM239 183h1v1h-1zM243 183h1v1h-1zM244 183h1v1h-1zM245 182h1v1h-1zM249 182h1v1h-1zM250 182h1v1h-1zM251 182h1v1h-1zM255 181h1v1h-1zM256 181h1v1h-1zM257 181h1v1h-1zM261 181h1v1h-1zM262 181h1v1h-1zM263 180h1v1h-1zM267 180h1v1h-1zM268 180h1v1h-1zM269 180h1v1h-1zM273 179h1v1h-1zM274 179h1v1h-1zM275 179h1v1h-1zM279 179h1v1h-1zM280 179h1v1h-1zM281 178h1v1h-1zM285 178h1v1h-1zM286 178h1v1h-1zM287 178h1v1h-1zM291 177h1v1h-1zM292 177h1v1h-1zM293 177h1v1h-1zM297 177h1v1h-1zM298 177h1v1h-1zM299 176h1v1h-1zM303 176h1v1h-1zM304 176h1v1h-1zM305 176h1v1h-1zM309 175h1v1h-1zM310 175h1v1h-1zM311 175h1v1h-1zM315 175h1v1h-1zM316 175h1v1h-1zM317 174h1v1h-1zM321 174h1v1h-1zM322 174h1v1h-1zM323 174h1v1h-1zM327 173h1v1h-1zM328 173h1v1h-1zM329 173h1v1h-1zM333 173h1v1h-1zM334 173h1v1h-1zM335 172h1v1h-1zM339 172h1v1h-1zM340 172h1v1h-1zM341 172h1v1h-1zM345 171h1v1h-1zM346 171h1v1h-1zM347 171h1v1h-1zM351 171h1v1h-1zM352 171h1v1h-1zM353 170h1v1h-1zM357 170h1v1h-1zM358 170h1v1h-1zM359 170h1v1h-1zM363 169h1v1h-1zM364 169h1v1h-1zM365 169h1v1h-1zM369 169h1v1h-1zM370 169h1v1h-1zM371 168h1v1h-1zM375 168h1v1h-1zM376 168h1v1h-1zM377 168h1v1h-1zM381 167h1v1h-1zM382 167h1v1h-1zM383 167h1v1h-1zM387 167h1v1h-1zM388 167h1v1h-1zM389 166h1v1h-1zM393 166h1v1h-1zM394 166h1v1h-1zM395 166h1v1h-1zM399 165h1v1h-1zM400 165h1v1h-1zM401 165h1v1h-1zM405 165h1v1h-1zM406 165h1v1h-1zM407 164h1v1h-1zM411 164h1v1h-1zM412 164h1v1h-1zM413 164h1v1h-1zM417 163h1v1h-1zM418 163h1v1h-1zM419 163h1v1h-1zM423 163h1v1h-1zM424 163h1v1h-1zM425 162h1v1h-1zM429 162h1v1h-1zM430 162h1v1h-1zM431 162h1v1h-1zM435 161h1v1h-1zM436 161h1v1h-1zM437 161h1v1h-1zM441 161h1v1h-1zM442 161h1v1h-1zM443 160h1v1h-1zM447 160h1v1h-1zM448 160h1v1h-1zM449 160h1v1h-1zM453 159h1v1h-1zM454 159h1v1h-1zM455 159h1v1h-1zM459 159h1v1h-1zM460 159h1v1h-1zM461 158h1v1h-1zM465 158h1v1h-1zM466 158h1v1h-1zM467 158h1v1h-1zM471 157h1v1h-1zM472 157h1v1h-1zM473 157h1v1h-1zM477 157h1v1h-1zM478 157h1v1h-1zM479 156h1v1h-1zM483 156h1v1h-1zM484 156h1v1h-1zM485 156h1v1h-1zM489 155h1v1h-1zM490 155h1v1h-1zM491 155h1v1h-1zM495 155h1v1h-1zM496 155h1v1h-1zM497 154h1v1h-1zM501 154h1v1h-1zM502 154h1v1h-1zM503 154h1v1h-1zM507 153h1v1h-1zM508 153h1v1h-1zM509 153h1v1h-1zM513 153h1v1h-1zM514 153h1v1h-1zM515 152h1v1h-1zM519 152h1v1h-1zM520 152h1v1h-1zM521 152h1v1h-1zM525 151h1v1h-1zM526 151h1v1h-1zM527 151h1v1h-1zM531 151h1v1h-1zM532 151h1v1h-1zM533 150h1v1h-1zM537 150h1v1h-1zM538 150h1v1h-1zM539 150h1v1h-1zM543 149h1v1h-1zM544 149h1v1h-1zM545 149h1v1h-1zM549 149h1v1h-1zM550 149h1v1h-1zM551 148h1v1h-1zM555 148h1v1h-1zM556 148h1v1h-1zM557 148h1v1h-1zM561 147h1v1h-1zM562 147h1v1h-1zM563 147h1v1h-1zM567 147h1v1h-1zM568 147h1v1h-1zM569 146h1v1h-1zM573 146h1v1h-1zM574 146h1v1h-1zM575 146h1v1h-1zM579 145h1v1h-1zM580 145h1v1h-1zM581 145h1v1h-1zM585 145h1v1h-1zM586 145h1v1h-1zM587 144h1v1h-1zM591 144h1v1h-1zM592 144h1v1h-1zM593 144h1v1h-1zM597 143h1v1h-1zM598 143h1v1h-1zM599 143h1v1h-1zM603 143h1v1h-1zM604 143h1v1h-1zM605 142h1v1h-1zM609 142h1v1h-1zM610 142h1v1h-1zM611 142h1v1h-1zM615 141h1v1h-1zM616 141h1v1h-1zM617 141h1v1h-1zM621 141h1v1h-1zM622 141h1v1h-1zM623 140h1v1h-1zM627 140h1v1h-1zM628 140h1v1h-1zM629 140h1v1h-1zM633 139h1v1h-1zM634 139h1v1h-1zM635 139h1v1h-1zM639 139h1v1h-1zM640 139h1v1h-1zM641 138h1v1h-1zM645 138h1v1h-1zM646 138h1v1h-1zM647 138h1v1h-1zM651 137h1v1h-1zM652 137h1v1h-1zM653 137h1v1h-1zM657 137h1v1h-1zM658 137h1v1h-1zM659 136h1v1h-1zM663 136h1v1h-1zM664 136h1v1h-1zM665 136h1v1h-1zM669 135h1v1h-1zM670 135h1v1h-1zM671 135h1v1h-1zM675 135h1v1h-1zM676 135h1v1h-1zM677 134h1v1h-1zM681 134h1v1h-1zM682 134h1v1h-1zM683 134h1v1h-1zM687 133h1v1h-1zM688 133h1v1h-1zM689 133h1v1h-1z"/>
<rect x="14" y="208" width="2" height="25" fill="#800080"/>
<rect x="689" y="133" width="2" height="11" fill="#800080"/>
<line x1="690.5" y1="93" x2="690.5" y2="240" stroke="#0000ff" stroke-width="1.2" stroke-dasharray="3 3"/>
</svg>

<!-- Transmissor group -->
<div class="grp" style="left:10px;top:252px;width:339px;height:190px"></div>
<div class="lbl" style="left:17px;top:246px">Transmissor</div>
<div class="bar" style="left:18px;top:267px"></div>
<div class="t" style="left:307px;top:265px;transform:none">S8</div>
<div class="combo" style="left:18px;top:283px;width:324px"><span class="tx">Buriti do Montes</span><div class="dd"></div></div>
<div class="t" style="left:19px;top:307px">Função</div>
<div class="t b" style="left:158px;top:307px">Terminal</div>
<div class="t" style="left:19px;top:327px">Nome do sistema Tx</div>
<div class="combo" style="left:157px;top:323px;width:185px"><span class="tx">Buriti</span><div class="dd"></div></div>
<div class="t" style="left:19px;top:345px">Potência Tx</div>
<div class="t b" style="left:158px;top:345px">0,3162 W</div>
<div class="t b" style="left:258px;top:345px">25 dBm</div>
<div class="t" style="left:19px;top:361px">Perda de linha</div>
<div class="t b" style="left:158px;top:361px">0,5 dB</div>
<div class="t" style="left:19px;top:377px">Ganho de antena</div>
<div class="t b" style="left:158px;top:377px">23 dBi</div>
<div class="t b" style="left:258px;top:377px">20,8 dBd</div>
<div class="btn" style="left:322px;top:373px;width:19px;height:19px">+</div>
<div class="t" style="left:19px;top:393px">Potência irradiada</div>
<div class="t b" style="left:158px;top:393px">EIRP=56,23 W</div>
<div class="t b" style="left:258px;top:393px">ERP=34,29 W</div>
<div class="t" style="left:19px;top:417px">Altura da antena (m)</div>
<div class="edit" style="left:157px;top:413px;width:52px;background:#a0ffa0"><span class="et">15</span></div>
<div class="btn" style="left:217px;top:414px;width:19px;height:18px">-</div>
<div class="btn" style="left:242px;top:414px;width:19px;height:18px">+</div>
<div class="btn" style="left:269px;top:410px;width:73px;height:27px;line-height:25px;color:#a0a0a0">Desfazer</div>

<!-- Receptor group -->
<div class="grp" style="left:355px;top:252px;width:339px;height:190px"></div>
<div class="lbl" style="left:363px;top:246px">Receptor</div>
<div class="bar" style="left:363px;top:267px"></div>
<div class="t" style="left:652.5px;top:265px;transform:none">S8</div>
<div class="combo" style="left:363px;top:283px;width:324px"><span class="tx">Faz. Marcos</span><div class="dd"></div></div>
<div class="t" style="left:364px;top:307px">Função</div>
<div class="t b" style="left:503px;top:307px">Nó</div>
<div class="t" style="left:364px;top:327px">Nome do sistema Rx</div>
<div class="combo" style="left:502px;top:323px;width:185px"><span class="tx">Buriti</span><div class="dd"></div></div>
<div class="t" style="left:364px;top:345px">Campo E requerido</div>
<div class="t b" style="left:503px;top:345px">55,02 dBµV/m</div>
<div class="t" style="left:364px;top:361px">Ganho de antena</div>
<div class="t b" style="left:503px;top:361px">23 dBi</div>
<div class="t b" style="left:603px;top:361px">20,8 dBd</div>
<div class="btn" style="left:667px;top:357px;width:19px;height:19px">+</div>
<div class="t" style="left:364px;top:377px">Perda de linha</div>
<div class="t b" style="left:503px;top:377px">0,5 dB</div>
<div class="t" style="left:364px;top:393px">Sensibilidade do Rx</div>
<div class="t b" style="left:503px;top:393px">39,8107µV</div>
<div class="t b" style="left:603px;top:393px">-75 dBm</div>
<div class="t" style="left:364px;top:417px">Altura da antena (m)</div>
<div class="edit" style="left:502px;top:413px;width:52px;background:#fff"><span class="et">6</span></div>
<div class="btn" style="left:562px;top:414px;width:19px;height:18px">-</div>
<div class="btn" style="left:587px;top:414px;width:19px;height:18px">+</div>
<div class="btn" style="left:614px;top:410px;width:73px;height:27px;line-height:25px;color:#a0a0a0">Desfazer</div>

<!-- Rede -->
<div class="grp" style="left:10px;top:452px;width:339px;height:50px"></div>
<div class="lbl" style="left:17px;top:446px">Rede</div>
<div class="combo" style="left:18px;top:471px;width:324px"><span class="tx">Buritinet</span><div class="dd"></div></div>

<!-- Frequencia -->
<div class="grp" style="left:355px;top:452px;width:339px;height:50px"></div>
<div class="lbl" style="left:363px;top:446px">Freqüência (MHz)</div>
<div class="t" style="left:395px;top:470px;transform:scaleX(0.95)">Mínimo</div>
<div class="edit" style="left:443px;top:470px;width:80px;background:#fff"><span class="et">5800</span></div>
<div class="t" style="left:551px;top:470px;transform:scaleX(0.92)">Máximo</div>
<div class="edit" style="left:606px;top:470px;width:80px;background:#fff"><span class="et">5850</span></div>
<div style="position:absolute;left:23px;top:270px;width:18px;height:4px;background:#00ff00"></div>
<div style="position:absolute;left:45px;top:270px;width:18px;height:4px;background:#00ff00"></div>
<div style="position:absolute;left:68px;top:270px;width:18px;height:4px;background:#00ff00"></div>
<div style="position:absolute;left:90px;top:270px;width:18px;height:4px;background:#00ff00"></div>
<div style="position:absolute;left:112px;top:270px;width:18px;height:4px;background:#00ff00"></div>
<div style="position:absolute;left:134px;top:270px;width:18px;height:4px;background:#00ff00"></div>
<div style="position:absolute;left:157px;top:270px;width:18px;height:4px;background:#00ff00"></div>
<div style="position:absolute;left:179px;top:270px;width:18px;height:4px;background:#00ff00"></div>
<div style="position:absolute;left:202px;top:270px;width:18px;height:4px;background:#008000"></div>
<div style="position:absolute;left:224px;top:270px;width:18px;height:4px;background:#800000"></div>
<div style="position:absolute;left:246px;top:270px;width:18px;height:4px;background:#800000"></div>
<div style="position:absolute;left:268px;top:270px;width:18px;height:4px;background:#800000"></div>
<div style="position:absolute;left:368px;top:270px;width:18px;height:4px;background:#00ff00"></div>
<div style="position:absolute;left:390px;top:270px;width:18px;height:4px;background:#00ff00"></div>
<div style="position:absolute;left:413px;top:270px;width:18px;height:4px;background:#00ff00"></div>
<div style="position:absolute;left:435px;top:270px;width:18px;height:4px;background:#00ff00"></div>
<div style="position:absolute;left:457px;top:270px;width:18px;height:4px;background:#00ff00"></div>
<div style="position:absolute;left:479px;top:270px;width:18px;height:4px;background:#00ff00"></div>
<div style="position:absolute;left:502px;top:270px;width:18px;height:4px;background:#00ff00"></div>
<div style="position:absolute;left:524px;top:270px;width:18px;height:4px;background:#00ff00"></div>
<div style="position:absolute;left:547px;top:270px;width:18px;height:4px;background:#008000"></div>
<div style="position:absolute;left:569px;top:270px;width:18px;height:4px;background:#800000"></div>
<div style="position:absolute;left:591px;top:270px;width:18px;height:4px;background:#800000"></div>
<div style="position:absolute;left:613px;top:270px;width:18px;height:4px;background:#800000"></div>
</body></html>
